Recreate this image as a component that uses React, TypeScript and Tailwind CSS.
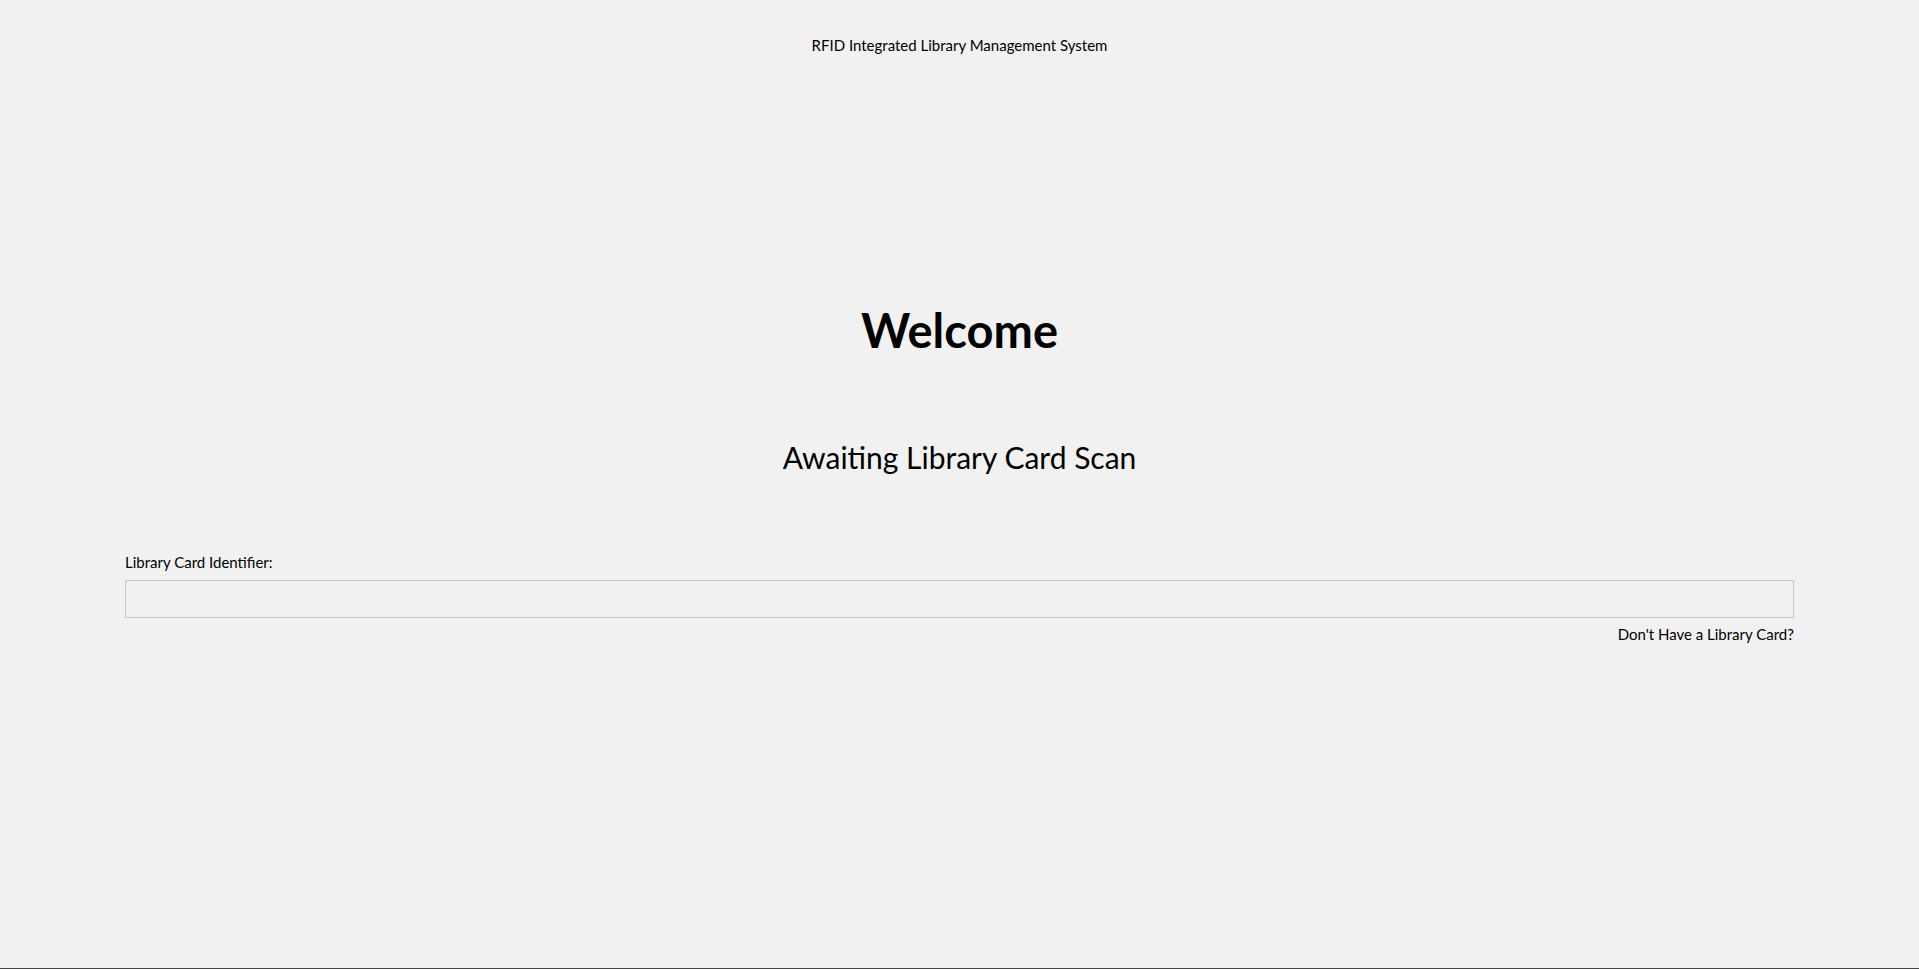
export default function App() {
  return (
    <main className="flex h-[969px] w-full flex-col items-center border-b border-[#444444] bg-[#f1f1f1] font-['Lato',sans-serif] text-black">
      {/* HEADER */}
      <p className="mt-[35px] text-[15px] leading-[20px]">
        RFID Integrated Library Management System
      </p>

      {/* WELCOME */}
      <h1 className="mt-[247px] text-[47px] font-bold leading-[56px]">
        Welcome
      </h1>

      <p className="mt-[81px] text-[30px] leading-[36px]">
        Awaiting Library Card Scan
      </p>

      {/* CARD INPUT */}
      <div className="mt-[77px] flex w-full flex-col px-[125px]">
        <label className="text-[15px] leading-[20px]">
          Library Card Identifier:
        </label>
        <input
          type="text"
          className="mt-[8px] h-[38px] w-full border border-[#c8c8c8] bg-transparent px-2 outline-none"
        />
        <p className="mt-[6px] text-right text-[15px] leading-[20px]">
          Don't Have a Library Card?
        </p>
      </div>
    </main>
  );
}
